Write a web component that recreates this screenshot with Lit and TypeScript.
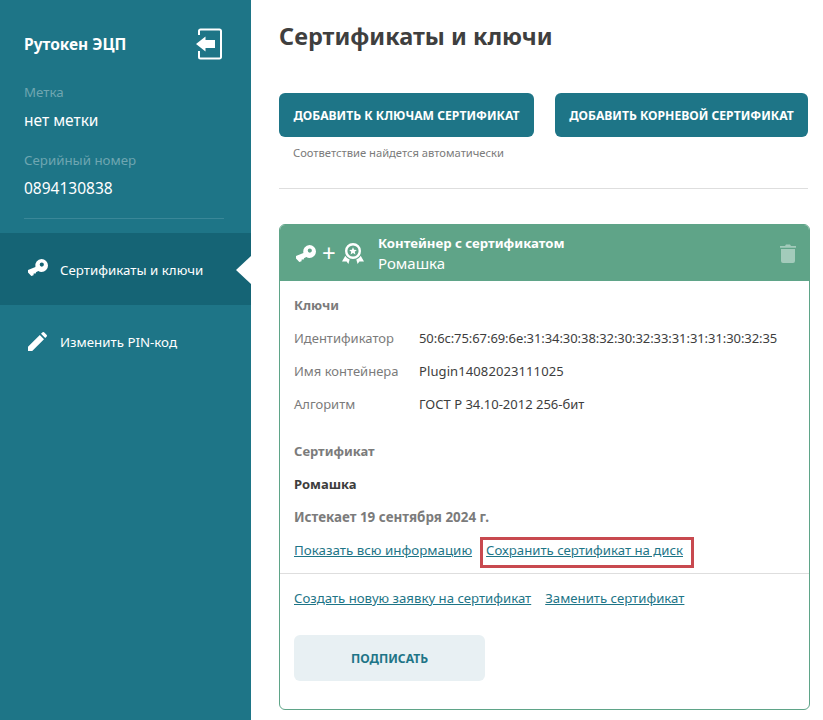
import { LitElement, html, css, svg } from 'lit';
import { customElement } from 'lit/decorators.js';

const keyIcon = svg`<path fill="#fff" fill-rule="evenodd" d="M13.500 0a6.500 6.500 0 1 1 0 13c-1.200 0-2.300-.3-3.200-.9L8 13.200 7.700 14.500 5.700 14.600 5.500 16.300 3.300 17 0 13.400 0 11 7.400 7.900A6.500 6.500 0 0 1 13.500 0Zm.3 3.500a2.100 2.100 0 1 0 0 4.200 2.100 2.100 0 0 0 0-4.200Z"/>`;

@customElement('app-root')
export class AppRoot extends LitElement {
  static styles = css`
    :host {
      display: block;
      width: 823px;
      height: 720px;
      overflow: hidden;
      background: #fff;
      font-family: 'Noto Sans', 'Open Sans', sans-serif;
      color: #3d3d3d;
    }
    .page {
      display: flex;
      height: 720px;
    }
    .side {
      width: 251px;
      flex-shrink: 0;
      background: #1e7587;
      color: #fff;
    }
    .info {
      padding: 24px 29px 0 24px;
    }
    .token {
      display: flex;
      justify-content: space-between;
      align-items: center;
      height: 40px;
      font-size: 15.500px;
      font-weight: 700;
    }
    .token svg {
      display: block;
    }
    .lbl {
      margin-top: 18px;
      font-size: 13.300px;
      line-height: 20px;
      color: #6fa6b1;
    }
    .val {
      margin-top: 8px;
      font-size: 15.500px;
      line-height: 20px;
    }
    .serial {
      margin-top: 20px;
    }
    .info hr {
      margin: 20px -2px 0 0;
      border: 0;
      border-top: 1px solid #3a8798;
    }
    .nav {
      margin-top: 14px;
    }
    .item {
      position: relative;
      display: flex;
      align-items: center;
      gap: 12px;
      height: 70px;
      padding: 2px 0 0 28px;
      font-size: 13.300px;
    }
    .item.on {
      background: #156475;
    }
    .item.on::after {
      content: '';
      position: absolute;
      right: 0;
      top: 23px;
      border-style: solid;
      border-color: transparent;
      border-width: 14px 15px 14px 0;
      border-right-color: #fff;
    }
    .item svg {
      flex-shrink: 0;
    }
    .item .key {
      margin-top: -5px;
    }
    .item .pen {
      margin-top: -2px;
    }
    .main {
      flex: 1;
      padding: 0 13px 0 28px;
      min-width: 0;
    }
    h1 {
      margin: 20px 0 0;
      font-size: 23.500px;
      line-height: 33px;
      font-weight: 700;
      color: #3f3f3f;
    }
    .actions {
      display: flex;
      justify-content: space-between;
      width: 529px;
      margin-top: 40px;
    }
    .btn {
      display: flex;
      align-items: center;
      justify-content: center;
      height: 44px;
      border-radius: 6px;
      background: #1e7587;
      color: #fff;
      font-size: 12.150px;
      font-weight: 700;
    }
    .btn.one {
      width: 255px;
    }
    .btn.two {
      width: 253px;
    }
    .hint {
      margin: 8px 0 0 14px;
      font-size: 11.200px;
      line-height: 16px;
      color: #7b7b7b;
    }
    .rule {
      width: 529px;
      margin-top: 27px;
      border-top: 1px solid #dedede;
    }
    .card {
      width: 529px;
      height: 484px;
      margin-top: 35px;
      border: 1px solid #5fa488;
      border-radius: 6px;
      overflow: hidden;
    }
    .head {
      display: flex;
      align-items: center;
      height: 56px;
      padding: 0 13px 0 16px;
      background: #5fa488;
      color: #fff;
    }
    .icons {
      display: flex;
      align-items: center;
      gap: 6px;
      width: 82px;
      flex-shrink: 0;
      font-size: 24px;
      line-height: 24px;
    }
    .title {
      flex: 1;
      line-height: 20px;
    }
    .title b {
      display: block;
      font-size: 13.200px;
    }
    .title span {
      font-size: 15px;
    }
    .body {
      padding: 14px 14px 0;
      font-size: 13px;
      color: #3d3d3d;
    }
    .sect {
      font-weight: 700;
      color: #7b7b7b;
      line-height: 20px;
    }
    .sect.cert {
      margin-top: 21px;
    }
    .rows {
      margin-top: 6px;
    }
    .row {
      display: flex;
      height: 33px;
      align-items: center;
    }
    .row span:first-child {
      width: 125px;
      color: #7b7b7b;
    }
    .row .tight {
      letter-spacing: -0.07px;
    }
    .row .wide {
      letter-spacing: 0.1px;
    }
    .line {
      line-height: 20px;
      margin-top: 13px;
      font-weight: 700;
    }
    .line.grey {
      font-size: 13.400px;
      color: #7b7b7b;
    }
    a {
      color: #1e7587;
      text-decoration: underline;
      white-space: nowrap;
    }
    .links {
      display: flex;
      gap: 14px;
      font-size: 13.200px;
      line-height: 20px;
    }
    .links.first {
      margin-top: 13px;
    }
    .links .more {
      font-size: 13.350px;
    }
    .boxed {
      position: relative;
    }
    .boxed::after {
      content: '';
      position: absolute;
      left: -6px;
      right: -11px;
      top: -3px;
      bottom: -8px;
      border: 3px solid #c8494f;
    }
    .sep {
      margin-top: 13px;
      border-top: 1px solid #dedede;
    }
    .sign {
      display: flex;
      align-items: center;
      justify-content: center;
      width: 191px;
      height: 46px;
      margin: 27px 0 0 14px;
      border-radius: 6px;
      background: #e8f0f3;
      color: #1e7587;
      font-size: 12.150px;
      font-weight: 700;
    }
  `;

  render() {
    return html`
      <div class="page">
        <aside class="side">
          <div class="info">
            <div class="token">
              <span>Рутокен ЭЦП</span>
              <svg width="26" height="32" viewBox="0 0 26 32">
                <path fill="none" stroke="#fff" stroke-width="2" d="M3 7V3a1.500 1.500 0 0 1 1.500-1.500h19A1.500 1.500 0 0 1 25 3v26a1.500 1.500 0 0 1-1.500 1.500h-19A1.500 1.500 0 0 1 3 29v-6" />
                <path fill="#fff" d="M0 16 9.500 8.500V12h9.500v8H9.500v3.500Z" />
              </svg>
            </div>
            <div class="lbl">Метка</div>
            <div class="val">нет метки</div>
            <div class="lbl serial">Серийный номер</div>
            <div class="val">0894130838</div>
            <hr />
          </div>
          <nav class="nav">
            <div class="item on">
              <svg class="key" width="20" height="17" viewBox="0 0 20 17">${keyIcon}</svg>
              Сертификаты и ключи
            </div>
            <div class="item">
              <svg class="pen" width="20" height="19" viewBox="0 0 20 19">
                <path fill="#fff" d="M0 19v-4.200L11.800 3l4.200 4.200L4.200 19ZM13 1.800 14.300.5a1.400 1.400 0 0 1 2 0l2.200 2.200a1.400 1.400 0 0 1 0 2L17.200 6Z" />
              </svg>
              Изменить PIN-код
            </div>
          </nav>
        </aside>
        <main class="main">
          <h1>Сертификаты и ключи</h1>
          <div class="actions">
            <div class="btn one">ДОБАВИТЬ К КЛЮЧАМ СЕРТИФИКАТ</div>
            <div class="btn two">ДОБАВИТЬ КОРНЕВОЙ СЕРТИФИКАТ</div>
          </div>
          <div class="hint">Соответствие найдется автоматически</div>
          <div class="rule"></div>
          <section class="card">
            <header class="head">
              <div class="icons">
                <svg width="20" height="17" viewBox="0 0 20 17">${keyIcon}</svg>
                <span>+</span>
                <svg width="22" height="21" viewBox="0 0 22 21">
                  <path fill="#fff" fill-rule="evenodd" d="M11 0a8 8 0 1 1 0 16 8 8 0 0 1 0-16Zm0 2.400a5.600 5.600 0 1 0 0 11.200 5.600 5.600 0 0 0 0-11.200Zm0 1.800 1.100 2.500 2.700.3-2 1.800.6 2.700L11 10.100l-2.400 1.400.6-2.700-2-1.800 2.700-.3ZM3.300 12.800c1 1.700 2.500 3 4.400 3.800L6.400 21l-1.800-2.600L0 18.500ZM18.700 12.800c-1 1.700-2.500 3-4.400 3.800l1.300 4.400 1.800-2.600 4.600.1Z" />
                </svg>
              </div>
              <div class="title">
                <b>Контейнер с сертификатом</b>
                <span>Ромашка</span>
              </div>
              <svg width="16" height="19" viewBox="0 0 16 19">
                <path fill="#a3cbbb" d="M1 5h14v12a2 2 0 0 1-2 2H3a2 2 0 0 1-2-2ZM0 2h5l1-1.500h4L11 2h5v1.800H0Z" />
              </svg>
            </header>
            <div class="body">
              <div class="sect">Ключи</div>
              <div class="rows">
                <div class="row"><span>Идентификатор</span><span class="tight">50:6c:75:67:69:6e:31:34:30:38:32:30:32:33:31:31:31:30:32:35</span></div>
                <div class="row"><span>Имя контейнера</span><span class="wide">Plugin14082023111025</span></div>
                <div class="row"><span>Алгоритм</span><span>ГОСТ Р 34.10-2012 256-бит</span></div>
              </div>
              <div class="sect cert">Сертификат</div>
              <div class="line">Ромашка</div>
              <div class="line grey">Истекает 19 сентября 2024 г.</div>
              <div class="links first">
                <a class="more">Показать всю информацию</a>
                <a class="boxed">Сохранить сертификат на диск</a>
              </div>
            </div>
            <div class="sep"></div>
            <div class="body">
              <div class="links">
                <a>Создать новую заявку на сертификат</a>
                <a>Заменить сертификат</a>
              </div>
            </div>
            <div class="sign">ПОДПИСАТЬ</div>
          </section>
        </main>
      </div>
    `;
  }
}
